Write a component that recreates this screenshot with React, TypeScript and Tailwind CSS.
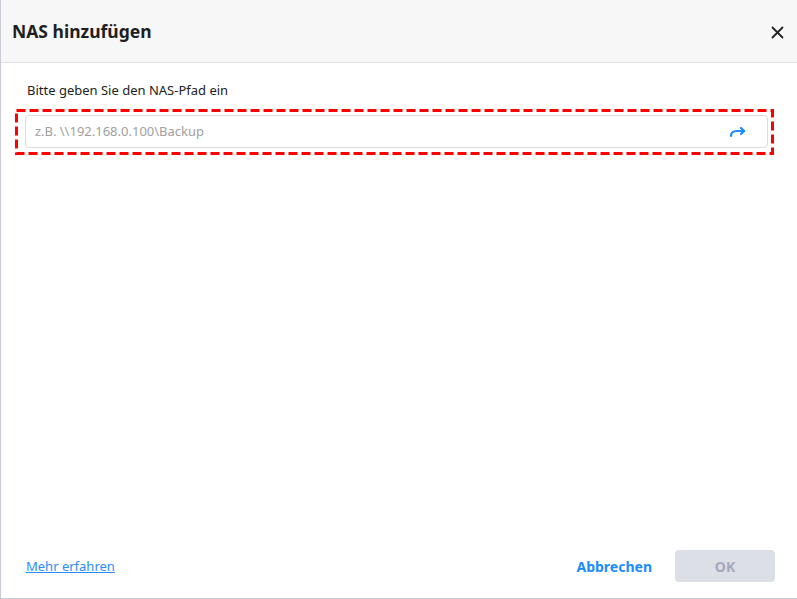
import React from "react";

export default function App() {
  return (
    <div
      className="w-[797px] h-[599px] bg-white flex flex-col border-l border-b border-[#c9ccd4] overflow-hidden"
      style={{ fontFamily: '"Noto Sans", "Open Sans", sans-serif' }}
    >
      <div className="h-[63px] shrink-0 bg-[#f7f7f7] border-b border-[#dedede] flex items-center justify-between pl-[11px] pr-[12px] pt-[2px]">
        <h1 className="text-[17.5px] font-bold text-[#1f1f1f] leading-none">NAS hinzufügen</h1>
        <button className="w-[16px] h-[16px] flex items-center justify-center text-[#222]">
          <svg width="13" height="13" viewBox="0 0 13 13" fill="none" stroke="currentColor" strokeWidth="1.8" strokeLinecap="round">
            <path d="M1.5 1.5 L11.5 11.5 M11.5 1.5 L1.5 11.5" />
          </svg>
        </button>
      </div>
      <div className="flex-1 flex flex-col pl-[14px] pr-[23px] pt-[17px]">
        <div className="pl-[12px] text-[13px] text-[#222] leading-[20px]">Bitte geben Sie den NAS-Pfad ein</div>
        <div className="relative mt-[9px] w-[759px] h-[46px] pl-[10px] pr-[6px] pt-[6px] pb-[7px]">
          <svg className="absolute left-0 top-0 pointer-events-none" width="759" height="46">
            <rect x="1.5" y="1.5" width="756" height="43" fill="none" stroke="#ff0000" strokeWidth="3" strokeDasharray="9 4" />
          </svg>
          <div className="h-[33px] border border-[#dcdcdc] rounded-[4px] flex items-center pl-[9px] pr-[20px]">
            <span className="flex-1 text-[13px] text-[#a0a0a0]">z.B. \\192.168.0.100\Backup</span>
            <svg width="18" height="12" viewBox="0 0 18 12" fill="none" stroke="#1a8cff" strokeWidth="2.2" strokeLinecap="round" strokeLinejoin="round">
              <path d="M2 10 C2 6 4 5 8 5 L15 5" />
              <path d="M12 2 L15 5 L12 8" />
            </svg>
          </div>
        </div>
      </div>
      <div className="shrink-0 flex items-center justify-between pl-[25px] pr-[22px] pb-[16px]">
        <a className="text-[13px] text-[#2b8cff] underline leading-[20px]">Mehr erfahren</a>
        <div className="flex items-center gap-[23px]">
          <button className="text-[14px] font-bold text-[#1a8cff]">Abbrechen</button>
          <button className="w-[100px] h-[32px] rounded-[4px] bg-[#dcdfe5] text-[14px] font-bold text-[#a7a6c0]">OK</button>
        </div>
      </div>
    </div>
  );
}
